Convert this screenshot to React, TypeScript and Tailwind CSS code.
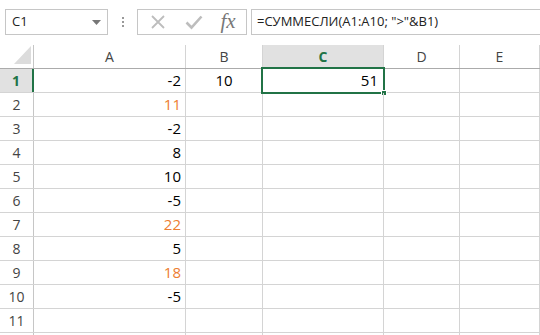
import React from "react";

const rows: { a: string; aColor?: string; b?: string; c?: string }[] = [
  { a: "-2", b: "10", c: "51" },
  { a: "11", aColor: "text-[#ed7d31]" },
  { a: "-2" },
  { a: "8" },
  { a: "10" },
  { a: "-5" },
  { a: "22", aColor: "text-[#ed7d31]" },
  { a: "5" },
  { a: "18", aColor: "text-[#ed7d31]" },
  { a: "-5" },
  { a: "" },
  { a: "" },
];

const ui = { fontFamily: '"Open Sans", "Noto Sans", sans-serif' };
const cellFont = { fontFamily: '"Open Sans", "Noto Sans", sans-serif' };

export default function App() {
  return (
    <div className="w-[540px] h-[335px] overflow-hidden bg-white relative" style={ui}>
      {/* Top bar */}
      <div className="h-[45px] flex items-start pt-[9px]">
        <div className="ml-[5px] w-[103px] h-[26px] border border-[#c6c6c6] flex items-center justify-between pl-[6px] pr-[6px] text-[13px] text-[#222]">
          <span>C1</span>
          <svg width="9" height="5" viewBox="0 0 9 5"><path d="M0 0h9L4.5 5z" fill="#777" /></svg>
        </div>
        <div className="w-[29px] h-[26px] flex flex-col items-center justify-center gap-[2px]">
          <span className="w-[2px] h-[2px] bg-[#999]" />
          <span className="w-[2px] h-[2px] bg-[#999]" />
          <span className="w-[2px] h-[2px] bg-[#999]" />
        </div>
        <div className="w-[110px] h-[26px] border border-[#c6c6c6] flex items-center">
          <div className="w-[36px] flex justify-center ml-[2px]">
            <svg width="16" height="16" viewBox="0 0 16 16"><path d="M2 2L14 14M14 2L2 14" stroke="#bdbdbd" strokeWidth="1.8" /></svg>
          </div>
          <div className="w-[36px] flex justify-center">
            <svg width="18" height="16" viewBox="0 0 18 16"><path d="M1.5 8.5L6.5 13.5L16.5 2.5" stroke="#bdbdbd" strokeWidth="2.6" fill="none" /></svg>
          </div>
          <div
            className="w-[32px] flex justify-center items-center text-[#787878] italic text-[21px] leading-none -mt-[2px]"
            style={{ fontFamily: '"Liberation Serif", "DejaVu Serif", serif' }}
          >
            fx
          </div>
        </div>
        <div className="ml-[4px] flex-1 h-[26px] border border-[#c6c6c6] border-r-0 flex items-center pl-[5px] text-[13px] text-[#222] whitespace-nowrap">
          =СУММЕСЛИ(A1:A10; "&gt;"&amp;B1)
        </div>
      </div>

      {/* Column header */}
      <div className="flex h-[24px] border-b border-[#ababab] text-[14px] text-[#444]">
        <div className="w-[34px] shrink-0 border-r border-[#c6c6c6] relative">
          <svg className="absolute right-[2px] bottom-[4px]" width="17" height="18" viewBox="0 0 17 18"><path d="M17 0V18H0z" fill="#dcdcdc" /></svg>
        </div>
        <div className="w-[152px] shrink-0 border-r border-[#d4d4d4] flex items-center justify-center">A</div>
        <div className="w-[77px] shrink-0 border-r border-[#d4d4d4] flex items-center justify-center">B</div>
        <div className="w-[121px] shrink-0 border-r border-[#d4d4d4] bg-[#e1e1e1] flex items-center justify-center font-bold text-[#217346] relative">
          C
          <div className="absolute left-0 right-0 -bottom-[1px] h-[2px] bg-[#217346]" />
        </div>
        <div className="w-[76px] shrink-0 border-r border-[#d4d4d4] flex items-center justify-center">D</div>
        <div className="w-[80px] shrink-0 border-r border-[#d4d4d4] flex items-center justify-center">E</div>
      </div>

      {/* Rows */}
      {rows.map((r, i) => {
        const sel = i === 0;
        return (
          <div key={i} className="flex h-[24px] border-b border-[#d4d4d4]">
            <div
              className={
                sel
                  ? "w-[34px] shrink-0 bg-[#e1e1e1] border-r-2 border-[#217346] flex items-center justify-center text-[14px] font-bold text-[#217346]"
                  : "w-[34px] shrink-0 border-r border-[#c6c6c6] flex items-center justify-center text-[14px] text-[#444]"
              }
            >
              {i < 11 ? i + 1 : ""}
            </div>
            <div
              className={"w-[152px] shrink-0 border-r border-[#d4d4d4] flex items-center justify-end pr-[4px] text-[15px] " + (r.aColor ?? "text-black")}
              style={cellFont}
            >
              {r.a}
            </div>
            <div className="w-[77px] shrink-0 border-r border-[#d4d4d4] flex items-center justify-center text-[15px] text-black" style={cellFont}>
              {r.b}
            </div>
            <div className="w-[121px] shrink-0 border-r border-[#d4d4d4] flex items-center justify-end pr-[5px] text-[15px] text-black relative" style={cellFont}>
              {r.c}
              {sel && (
                <>
                  <div className="absolute -left-[2px] -top-[2px] -right-[2px] -bottom-[2px] border-2 border-[#217346] pointer-events-none" />
                  <div className="absolute -right-[4px] -bottom-[4px] w-[6px] h-[6px] bg-[#217346] border border-white" />
                </>
              )}
            </div>
            <div className="w-[76px] shrink-0 border-r border-[#d4d4d4]" />
            <div className="w-[80px] shrink-0 border-r border-[#d4d4d4]" />
          </div>
        );
      })}
    </div>
  );
}
